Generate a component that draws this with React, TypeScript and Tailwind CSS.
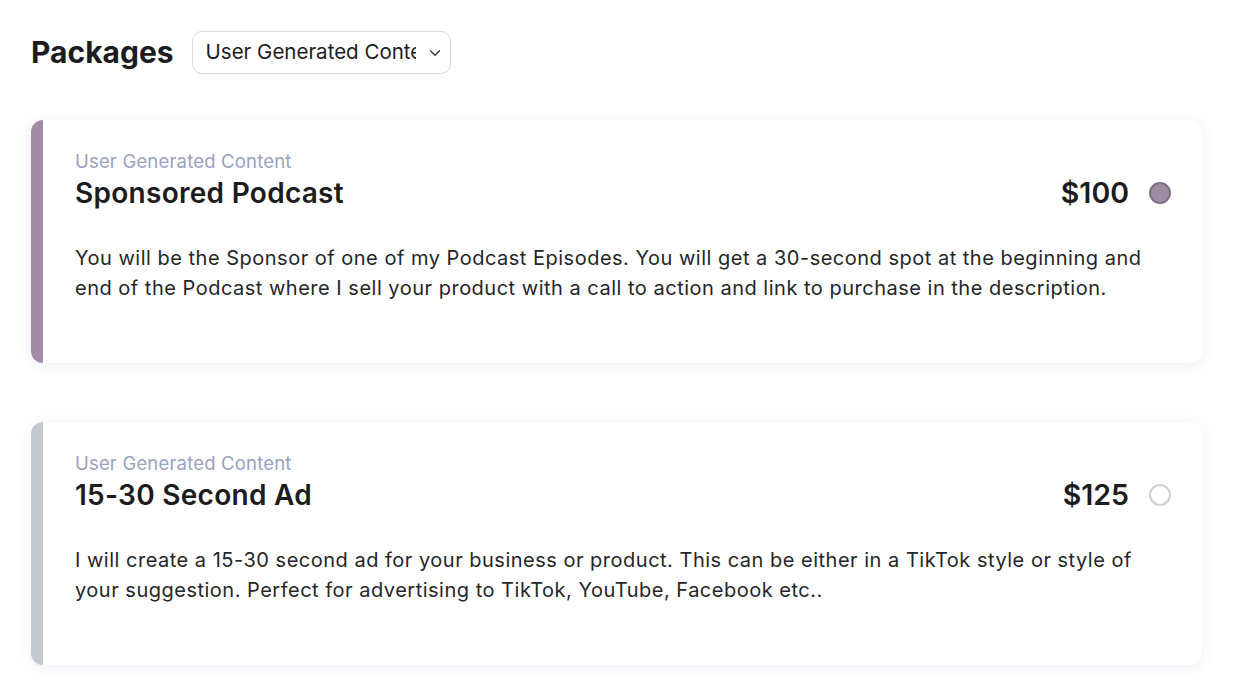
import { ChevronDown } from "lucide-react";

type Pkg = {
  category: string;
  title: string;
  price: string;
  description: string;
  selected: boolean;
};

const packages: Pkg[] = [
  {
    category: "User Generated Content",
    title: "Sponsored Podcast",
    price: "$100",
    description:
      "You will be the Sponsor of one of my Podcast Episodes. You will get a 30-second spot at the beginning and end of the Podcast where I sell your product with a call to action and link to purchase in the description.",
    selected: true,
  },
  {
    category: "User Generated Content",
    title: "15-30 Second Ad",
    price: "$125",
    description:
      "I will create a 15-30 second ad for your business or product. This can be either in a TikTok style or style of your suggestion. Perfect for advertising to TikTok, YouTube, Facebook etc..",
    selected: false,
  },
];

function PackageCard({ pkg }: { pkg: Pkg }) {
  return (
    <div
      className={
        "flex h-[243px] overflow-hidden rounded-xl bg-white shadow-[0_2px_14px_rgba(120,125,170,0.12)] " +
        (pkg.selected ? "border-l-[12px] border-[#a08ca6]" : "border-l-[12px] border-[#c4c9d0]")
      }
    >
      <div className="flex-1 pl-8 pr-[31px] pt-[29px]">
        <p className="text-[18.5px] leading-6 tracking-[0.01em] text-[#99a2c0]">{pkg.category}</p>
        <div className="flex items-center justify-between">
          <h2 className="text-[28px] font-semibold leading-[40px] tracking-[0.01em] text-[#1c1c1e]">{pkg.title}</h2>
          <div className="flex items-center gap-5">
            <span className="text-[28.5px] font-semibold leading-[40px] text-[#1c1c1e]">{pkg.price}</span>
            {pkg.selected ? (
              <span className="h-[22px] w-[22px] rounded-full border-2 border-[#7f6f87] bg-[#9c8ca3]" />
            ) : (
              <span className="h-[22px] w-[22px] rounded-full border-2 border-[#cfcfd2] bg-white" />
            )}
          </div>
        </div>
        <p className="mt-[30px] text-[20px] leading-[30px] tracking-[0.025em] text-[#262628]">{pkg.description}</p>
      </div>
    </div>
  );
}

export default function App() {
  return (
    <div className="min-h-screen bg-white px-[31px] pt-[30px] font-['Inter',sans-serif]">
      <div className="flex items-center gap-[18px]">
        <h1 className="text-[30px] font-bold text-[#1c1c1e]">Packages</h1>
        <div className="flex h-[43px] w-[259px] items-center justify-between rounded-[10px] border border-[#d8d8dc] pl-[13px] pr-[6px]">
          <span className="w-[210px] overflow-hidden whitespace-nowrap text-[20.5px] text-[#1c1c1e]">User Generated Content</span>
          <ChevronDown className="h-[18px] w-[18px] text-[#333]" strokeWidth={1.75} />
        </div>
      </div>
      <div className="mt-[45px] flex flex-col gap-[59px]">
        {packages.map((p) => (
          <PackageCard key={p.title} pkg={p} />
        ))}
      </div>
    </div>
  );
}
